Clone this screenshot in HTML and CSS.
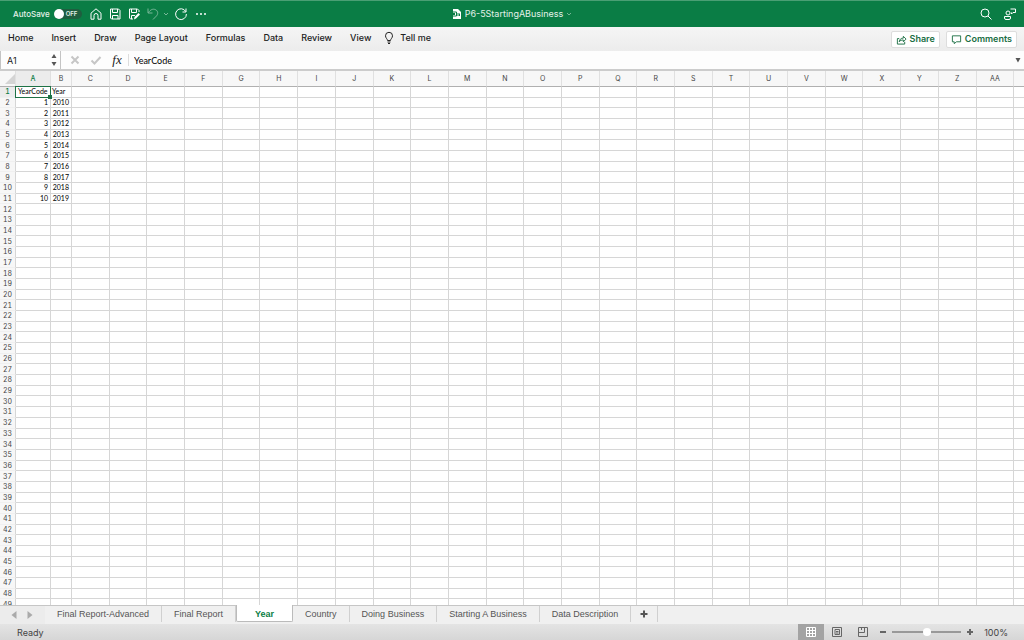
FILE: index.html
```
<!DOCTYPE html>
<html lang="en">
<head>
	<meta charset="UTF-8">
	<title>P6-5StartingABusiness</title>
	<link rel="stylesheet" href="styles.css">
</head>
<body>
	<header class="titlebar">
		<label class="autosave">AutoSave
			<input type="checkbox" class="switch-input">
			<span class="switch">OFF</span>
		</label>
		<div class="quick">
			<button type="button" aria-label="Home"><svg viewBox="0 0 14 14"><path d="M2 6.2 7 1.8l5 4.4v6H9V8.5a2 2 0 0 0-4 0v3.7H2z"/></svg></button>
			<button type="button" aria-label="Save"><svg viewBox="0 0 14 14"><path d="M2.5 2h8L12 3.5V12H3.5l-1-1zM4.500 2v3.500h5V2M4.500 12V8.500h5.500V12"/></svg></button>
			<button type="button" aria-label="Save as"><svg viewBox="0 0 14 14"><path d="M6 12H3.500l-1-1V2h8L12 3.500V5M4.500 2v3.500h5V2M4.500 12V8.500H8"/><path class="solid" d="M7 12.500 7.500 10l4-4L13 7.500l-4 4z"/></svg></button>
			<button type="button" aria-label="Undo" class="dim"><svg viewBox="0 0 14 14"><path d="M2 1.500V6h4.500M2.300 5.800C4.500 2.500 7 1.600 9.300 2.600c3 1.300 3 4.500 1 6.500L7 12.500"/></svg></button>
			<button type="button" aria-label="Undo list" class="dim narrow"><svg viewBox="0 0 6 14"><path d="m1 6 2 2 2-2"/></svg></button>
			<button type="button" aria-label="Redo" class="redo"><svg viewBox="0 0 14 14"><path d="M12 1.500V5H8.500M11.700 4.500A5.400 5.400 0 1 0 12.400 7"/></svg></button>
			<button type="button" aria-label="More"><svg viewBox="0 0 14 14"><g class="solid"><circle cx="3" cy="7" r="1"/><circle cx="7" cy="7" r="1"/><circle cx="11" cy="7" r="1"/></g></svg></button>
		</div>
		<div class="doc-name">
			<svg class="doc-icon" viewBox="0 0 10 12"><path class="solid" d="M1 1h5l3 3v7H1z"/><path class="mark" d="M0 4h4.500v4H0M1 5l2 2M3 5 1 7M6 5v3M7.500 5.500V8"/></svg>
			<span>P6-5StartingABusiness</span>
			<svg class="doc-arrow" viewBox="0 0 6 6"><path d="m1 2 2 2 2-2"/></svg>
		</div>
		<div class="title-right">
			<button type="button" aria-label="Search"><svg viewBox="0 0 14 14"><circle cx="6" cy="6" r="4"/><path d="m9 9 3.500 3.500"/></svg></button>
			<button type="button" aria-label="Presence"><svg viewBox="0 0 14 14"><circle cx="5" cy="6" r="2"/><path d="M1.500 9.500h6v1.500a1.500 1.500 0 0 1-1.500 1.500H3A1.500 1.500 0 0 1 1.500 11zM7.500 2h5v3.500H10L8.500 7V5.500"/></svg></button>
		</div>
	</header>

	<nav class="ribbon">
		<a href="#home">Home</a>
		<a href="#insert">Insert</a>
		<a href="#draw">Draw</a>
		<a href="#layout">Page Layout</a>
		<a href="#formulas">Formulas</a>
		<a href="#data">Data</a>
		<a href="#review">Review</a>
		<a href="#view">View</a>
		<a href="#tell" class="tell"><svg viewBox="0 0 10 14"><path d="M3.500 9.500C3.500 8 1.500 7 1.500 4.800a3.500 3.500 0 0 1 7 0C8.500 7 6.500 8 6.500 9.500zM3.500 11h3M4 12.500h2"/></svg>Tell me</a>
		<div class="ribbon-right">
			<button type="button" class="pill"><svg viewBox="0 0 12 12"><path d="M3.500 5H1.500v6h8V8.500M3.500 8.500c.5-3 2-4 4.500-4V2.500L11 5.500l-3 3v-2c-2 0-3.500.5-4.500 2z"/></svg>Share</button>
			<button type="button" class="pill"><svg viewBox="0 0 12 12"><path d="M1.500 2h9v6.500H6l-2.500 2v-2h-2z"/></svg>Comments</button>
		</div>
	</nav>

	<div class="formula-bar">
		<div class="name-box">
			<input type="text" value="A1" aria-label="Name box">
			<svg viewBox="0 0 6 14"><path d="m.5 5 2.500-4 2.500 4zM.5 9l2.500 4 2.500-4z"/></svg>
		</div>
		<button type="button" aria-label="Cancel" class="faded"><svg viewBox="0 0 12 12"><path d="m2.500 2.500 7 7M9.500 2.500l-7 7"/></svg></button>
		<button type="button" aria-label="Enter" class="faded"><svg viewBox="0 0 12 12"><path d="m1.500 6.500 3 3 6-6.500"/></svg></button>
		<button type="button" class="fx">fx</button>
		<input type="text" class="formula" value="YearCode" aria-label="Formula">
		<button type="button" aria-label="Expand formula bar" class="expand"><svg viewBox="0 0 6 6"><path d="M.5 1h5L3 5.500z"/></svg></button>
	</div>

	<main class="sheet">
		<table class="grid" id="grid">
			<colgroup>
				<col class="col-num">
				<col class="col-a">
				<col class="col-b">
			</colgroup>
		</table>
	</main>

	<nav class="tabs">
		<div class="tab-nav">
			<button type="button" aria-label="Previous sheet"><svg viewBox="0 0 6 8"><path d="M5.500 0v8L.5 4z"/></svg></button>
			<button type="button" aria-label="Next sheet"><svg viewBox="0 0 6 8"><path d="M.5 0v8l5-4z"/></svg></button>
		</div>
		<button type="button" class="tab">Final Report-Advanced</button>
		<button type="button" class="tab">Final Report</button>
		<button type="button" class="tab active">Year</button>
		<button type="button" class="tab">Country</button>
		<button type="button" class="tab">Doing Business</button>
		<button type="button" class="tab">Starting A Business</button>
		<button type="button" class="tab">Data Description</button>
		<button type="button" class="tab add" aria-label="Add sheet"><svg viewBox="0 0 8 8"><path d="M4 .5v7M.5 4h7"/></svg></button>
	</nav>

	<footer class="status">
		<span class="ready">Ready</span>
		<button type="button" class="view on" aria-label="Normal view"><svg viewBox="0 0 12 12"><path d="M1.500 1.500h9v9h-9zM4.500 1.500v9M7.500 1.500v9M1.500 4.500h9M1.500 7.500h9"/></svg></button>
		<button type="button" class="view" aria-label="Page layout view"><svg viewBox="0 0 12 12"><path d="M1.500 1.500h9v9h-9zM4 3.500h4.500v5H4zM5 5.500h2.500M5 7h2.500"/></svg></button>
		<button type="button" class="view" aria-label="Page break view"><svg viewBox="0 0 12 12"><path d="M1.500 1.500h9v9h-9zM1.500 6.500h6v-5M4.500 1.500v2.500"/></svg></button>
		<div class="zoom">
			<button type="button" aria-label="Zoom out"><svg viewBox="0 0 8 8"><path d="M1 4h6"/></svg></button>
			<input type="range" min="0" max="200" value="100" aria-label="Zoom">
			<button type="button" aria-label="Zoom in"><svg viewBox="0 0 8 8"><path d="M4 1v6M1 4h6"/></svg></button>
			<span class="percent">100%</span>
		</div>
	</footer>
<script src="script.js"></script>
</body>
</html>
```
FILE: styles.css
```
*{
	box-sizing: border-box;
	margin: 0;
	padding: 0;
}
body{
	display: flex;
	flex-direction: column;
	height: 100vh;
	overflow: hidden;
	font-family: Inter, "Liberation Sans", sans-serif;
	font-size: 9px;
	color: #222;
	background: #fff;
}
button, input{
	font: inherit;
	color: inherit;
	border: 0;
	background: none;
}
button{
	display: flex;
	align-items: center;
	justify-content: center;
}
a{
	color: inherit;
	text-decoration: none;
}
svg{
	display: block;
	flex: none;
	fill: none;
	stroke: currentColor;
}

/* title bar */
.titlebar{
	display: grid;
	grid-template-columns: 1fr auto 1fr;
	grid-template-areas: "left name right";
	align-items: center;
	height: 27px;
	flex: none;
	padding-bottom: 1px;
	background: #0a7d45;
	border-top: 1px solid #4a9f74;
	color: #fff;
}
.autosave{
	grid-area: left;
	display: flex;
	align-items: center;
	gap: 4px;
	padding-left: 13px;
	font-size: 8px;
	font-weight: 500;
	color: #e3f1e9;
}
.switch-input{
	position: absolute;
	opacity: 0;
}
.switch{
	display: flex;
	align-items: center;
	gap: 2px;
	width: 28px;
	height: 10px;
	border-radius: 5px;
	background: #1f5e3f;
	font-size: 6px;
	font-weight: 600;
}
.switch::before{
	content: "";
	width: 10px;
	height: 10px;
	border-radius: 50%;
	background: #fff;
}
.quick{
	grid-area: left;
	display: flex;
	padding-left: 86px;
}
.quick button{
	width: 19px;
}
.quick .narrow{
	width: 8px;
}
.quick .redo{
	width: 21px;
}
.quick svg, .title-right svg{
	width: 14px;
	height: 14px;
}
.quick .narrow svg{
	width: 6px;
}
.solid{
	fill: #fff;
	stroke: none;
}
.dim{
	opacity: 0.45;
}
.doc-name{
	grid-area: name;
	display: flex;
	align-items: center;
	gap: 3px;
	font-size: 9px;
	color: #e3f1e9;
}
.doc-icon{
	width: 10px;
	height: 12px;
}
.mark{
	stroke: #0a7d45;
}
.doc-arrow{
	width: 6px;
	height: 6px;
	opacity: 0.5;
}
.title-right{
	grid-area: right;
	display: flex;
	justify-content: flex-end;
	gap: 10px;
	padding-right: 7px;
}

/* ribbon tabs */
.ribbon{
	display: flex;
	align-items: center;
	gap: 18px;
	height: 24px;
	flex: none;
	padding: 0 7px 0 8px;
	background: linear-gradient(#f5f5f5, #ececec);
	font-weight: 500;
	line-height: 20px;
}
.ribbon a{
	padding-bottom: 3px;
}
.tell{
	display: flex;
	align-items: center;
	gap: 6px;
	margin-left: -5px;
}
.tell svg{
	width: 10px;
	height: 14px;
}
.ribbon-right{
	display: flex;
	gap: 6px;
	margin-left: auto;
}
.pill{
	gap: 3px;
	height: 17px;
	padding: 0 4px;
	border: 1px solid #ddd;
	border-radius: 2px;
	background: #fff;
	color: #1a6e43;
	font-weight: 600;
}
.pill svg{
	width: 11px;
	height: 11px;
}

/* formula bar */
.formula-bar{
	display: flex;
	align-items: center;
	height: 20px;
	flex: none;
	border-bottom: 2px solid #ccc;
	background: #fdfdfd;
}
.name-box{
	display: flex;
	align-items: center;
	width: 61px;
	height: 100%;
	padding: 0 3px 0 6px;
	border: 1px solid #c4c4c4;
	border-width: 0 1px 0 1px;
}
.name-box input{
	flex: 1;
	min-width: 0;
}
.name-box svg, .expand svg{
	width: 6px;
	fill: #555;
	stroke: none;
}
.name-box svg{
	height: 14px;
}
.faded{
	width: 21px;
	color: #c6c6c6;
	stroke-width: 2px;
}
.faded:nth-child(2){
	margin-left: 3px;
}
.faded svg{
	width: 12px;
	height: 12px;
}
.fx{
	width: 23px;
	height: 12px;
	border-right: 1px solid #ddd;
	font-family: "Liberation Serif", serif;
	font-size: 13px;
	font-style: italic;
}
.formula{
	flex: 1;
	min-width: 0;
	padding-left: 5px;
	font-family: Lato, sans-serif;
	color: #000;
}
.expand{
	width: 12px;
}
.expand svg{
	height: 6px;
}

/* cells */
.sheet{
	flex: 1;
	min-height: 0;
	overflow: hidden;
}
.grid{
	width: calc(100% + 28px);
	height: calc(100% + 5px);
	table-layout: fixed;
	border-collapse: separate;
	border-spacing: 0;
	font-family: Lato, sans-serif;
	font-size: 7px;
	line-height: 9px;
	color: #000;
}
.col-num{
	width: 16px;
}
.col-a{
	width: 35px;
}
.col-b{
	width: 21px;
}
.grid th, .grid td{
	border-right: 1px solid #d6d6d6;
	border-bottom: 1px solid #d6d6d6;
	white-space: nowrap;
}
.grid td{
	padding: 0 1px;
}
.grid th{
	background: #f7f7f7;
	color: #444;
	font-family: Inter, sans-serif;
	font-weight: 400;
	font-variant-numeric: tabular-nums;
}
.grid thead th{
	height: 16px;
	border-bottom-color: #b0b0b0;
	border-right-color: #e0e0e0;
}
.grid tbody th{
	border-bottom-color: #f0f0f0;
}
.grid .picked{
	background: #ececec;
	color: #0a7d45;
	font-weight: 500;
}
.grid thead .picked{
	border-bottom-color: #1e7245;
}
.corner svg{
	width: 10px;
	height: 10px;
	margin-left: auto;
	fill: #d4d4d4;
	stroke: none;
}
.grid .num{
	padding-right: 2px;
	text-align: right;
}
.grid .current{
	position: relative;
	padding-left: 2px;
}
.current::before{
	content: "";
	position: absolute;
	inset: -1px;
	border: 1px solid #1e7245;
}
.current::after{
	content: "";
	position: absolute;
	right: -2px;
	bottom: -2px;
	width: 4px;
	height: 4px;
	background: #1e7245;
}

/* sheet tabs */
.tabs{
	display: flex;
	height: 19px;
	flex: none;
	background: #f0f0f0;
	border-top: 1px solid #c6c6c6;
	font-family: "Liberation Sans", sans-serif;
	color: #555;
}
.tab-nav{
	display: flex;
	justify-content: center;
	gap: 10px;
	width: 45px;
	padding-right: 2px;
	background: #ececec;
}
.tab-nav svg{
	width: 6px;
	height: 8px;
	fill: #aaa;
	stroke: none;
}
.tab{
	height: 16px;
	padding: 0 12px;
	border-right: 1px solid #d0d0d0;
}
.tab.active{
	min-width: 57px;
	height: 17px;
	margin-top: -1px;
	padding-top: 1px;
	border: 1px solid #bbb;
	border-top: 0;
	border-radius: 0 0 2px 2px;
	background: #fff;
	color: #0a7d45;
	font-weight: bold;
}
.tab.add{
	padding: 0 9px;
	stroke-width: 2px;
}
.add svg{
	width: 8px;
	height: 8px;
}

/* status bar */
.status{
	display: flex;
	align-items: center;
	height: 16px;
	flex: none;
	padding: 0 16px 0 17px;
	background: linear-gradient(#e4e4e4, #d6d6d6);
	color: #444;
}
.ready{
	margin-right: auto;
}
.view{
	width: 26px;
	height: 16px;
	color: #666;
}
.view.on{
	background: #a3a3a3;
	color: #fff;
}
.view svg{
	width: 12px;
	height: 12px;
}
.zoom{
	display: flex;
	align-items: center;
	gap: 5px;
	margin-left: 3px;
	color: #666;
}
.zoom svg{
	width: 8px;
	height: 8px;
	stroke-width: 2px;
}
.zoom input{
	width: 69px;
	height: 8px;
	appearance: none;
	background: linear-gradient(#999, #999) center / 100% 2px no-repeat;
}
.zoom input::-webkit-slider-thumb{
	appearance: none;
	width: 8px;
	height: 8px;
	border-radius: 50%;
	background: #fff;
}
.percent{
	width: 29px;
	text-align: right;
	color: #444;
}
```
FILE: script.js
```
window.onload=function(){
	var grid=document.getElementById('grid');
	var rows=49;
	var cols=28;
	var data=[['YearCode','Year']];
	var i,j;

	for(i=1;i<=10;i++){
		data.push([i,2009+i]);
	}

	// 0 -> A, 26 -> AA
	function colName(n){
		var s=String.fromCharCode(65+n%26);
		return n<26?s:'A'+s;
	}

	var html='<thead><tr><th class="corner"><svg viewBox="0 0 10 10"><path d="M10 0v10H0z"/></svg></th>';
	for(j=0;j<cols;j++){
		html+='<th'+(j==0?' class="picked"':'')+'>'+(j<cols-1?colName(j):'')+'</th>';
	}
	html+='</tr></thead><tbody>';

	for(i=0;i<rows;i++){
		html+='<tr><th scope="row"'+(i==0?' class="picked"':'')+'>'+(i+1)+'</th>';
		for(j=0;j<cols;j++){
			var text=data[i]&&data[i][j]!==undefined?data[i][j]:'';
			var cls='';
			if(i==0&&j==0){
				cls=' class="current"';
			}else if(typeof text=='number'){
				cls=' class="num"';
			}
			html+='<td'+cls+'>'+text+'</td>';
		}
		html+='</tr>';
	}
	grid.insertAdjacentHTML('beforeend',html+'</tbody>');
}
```
